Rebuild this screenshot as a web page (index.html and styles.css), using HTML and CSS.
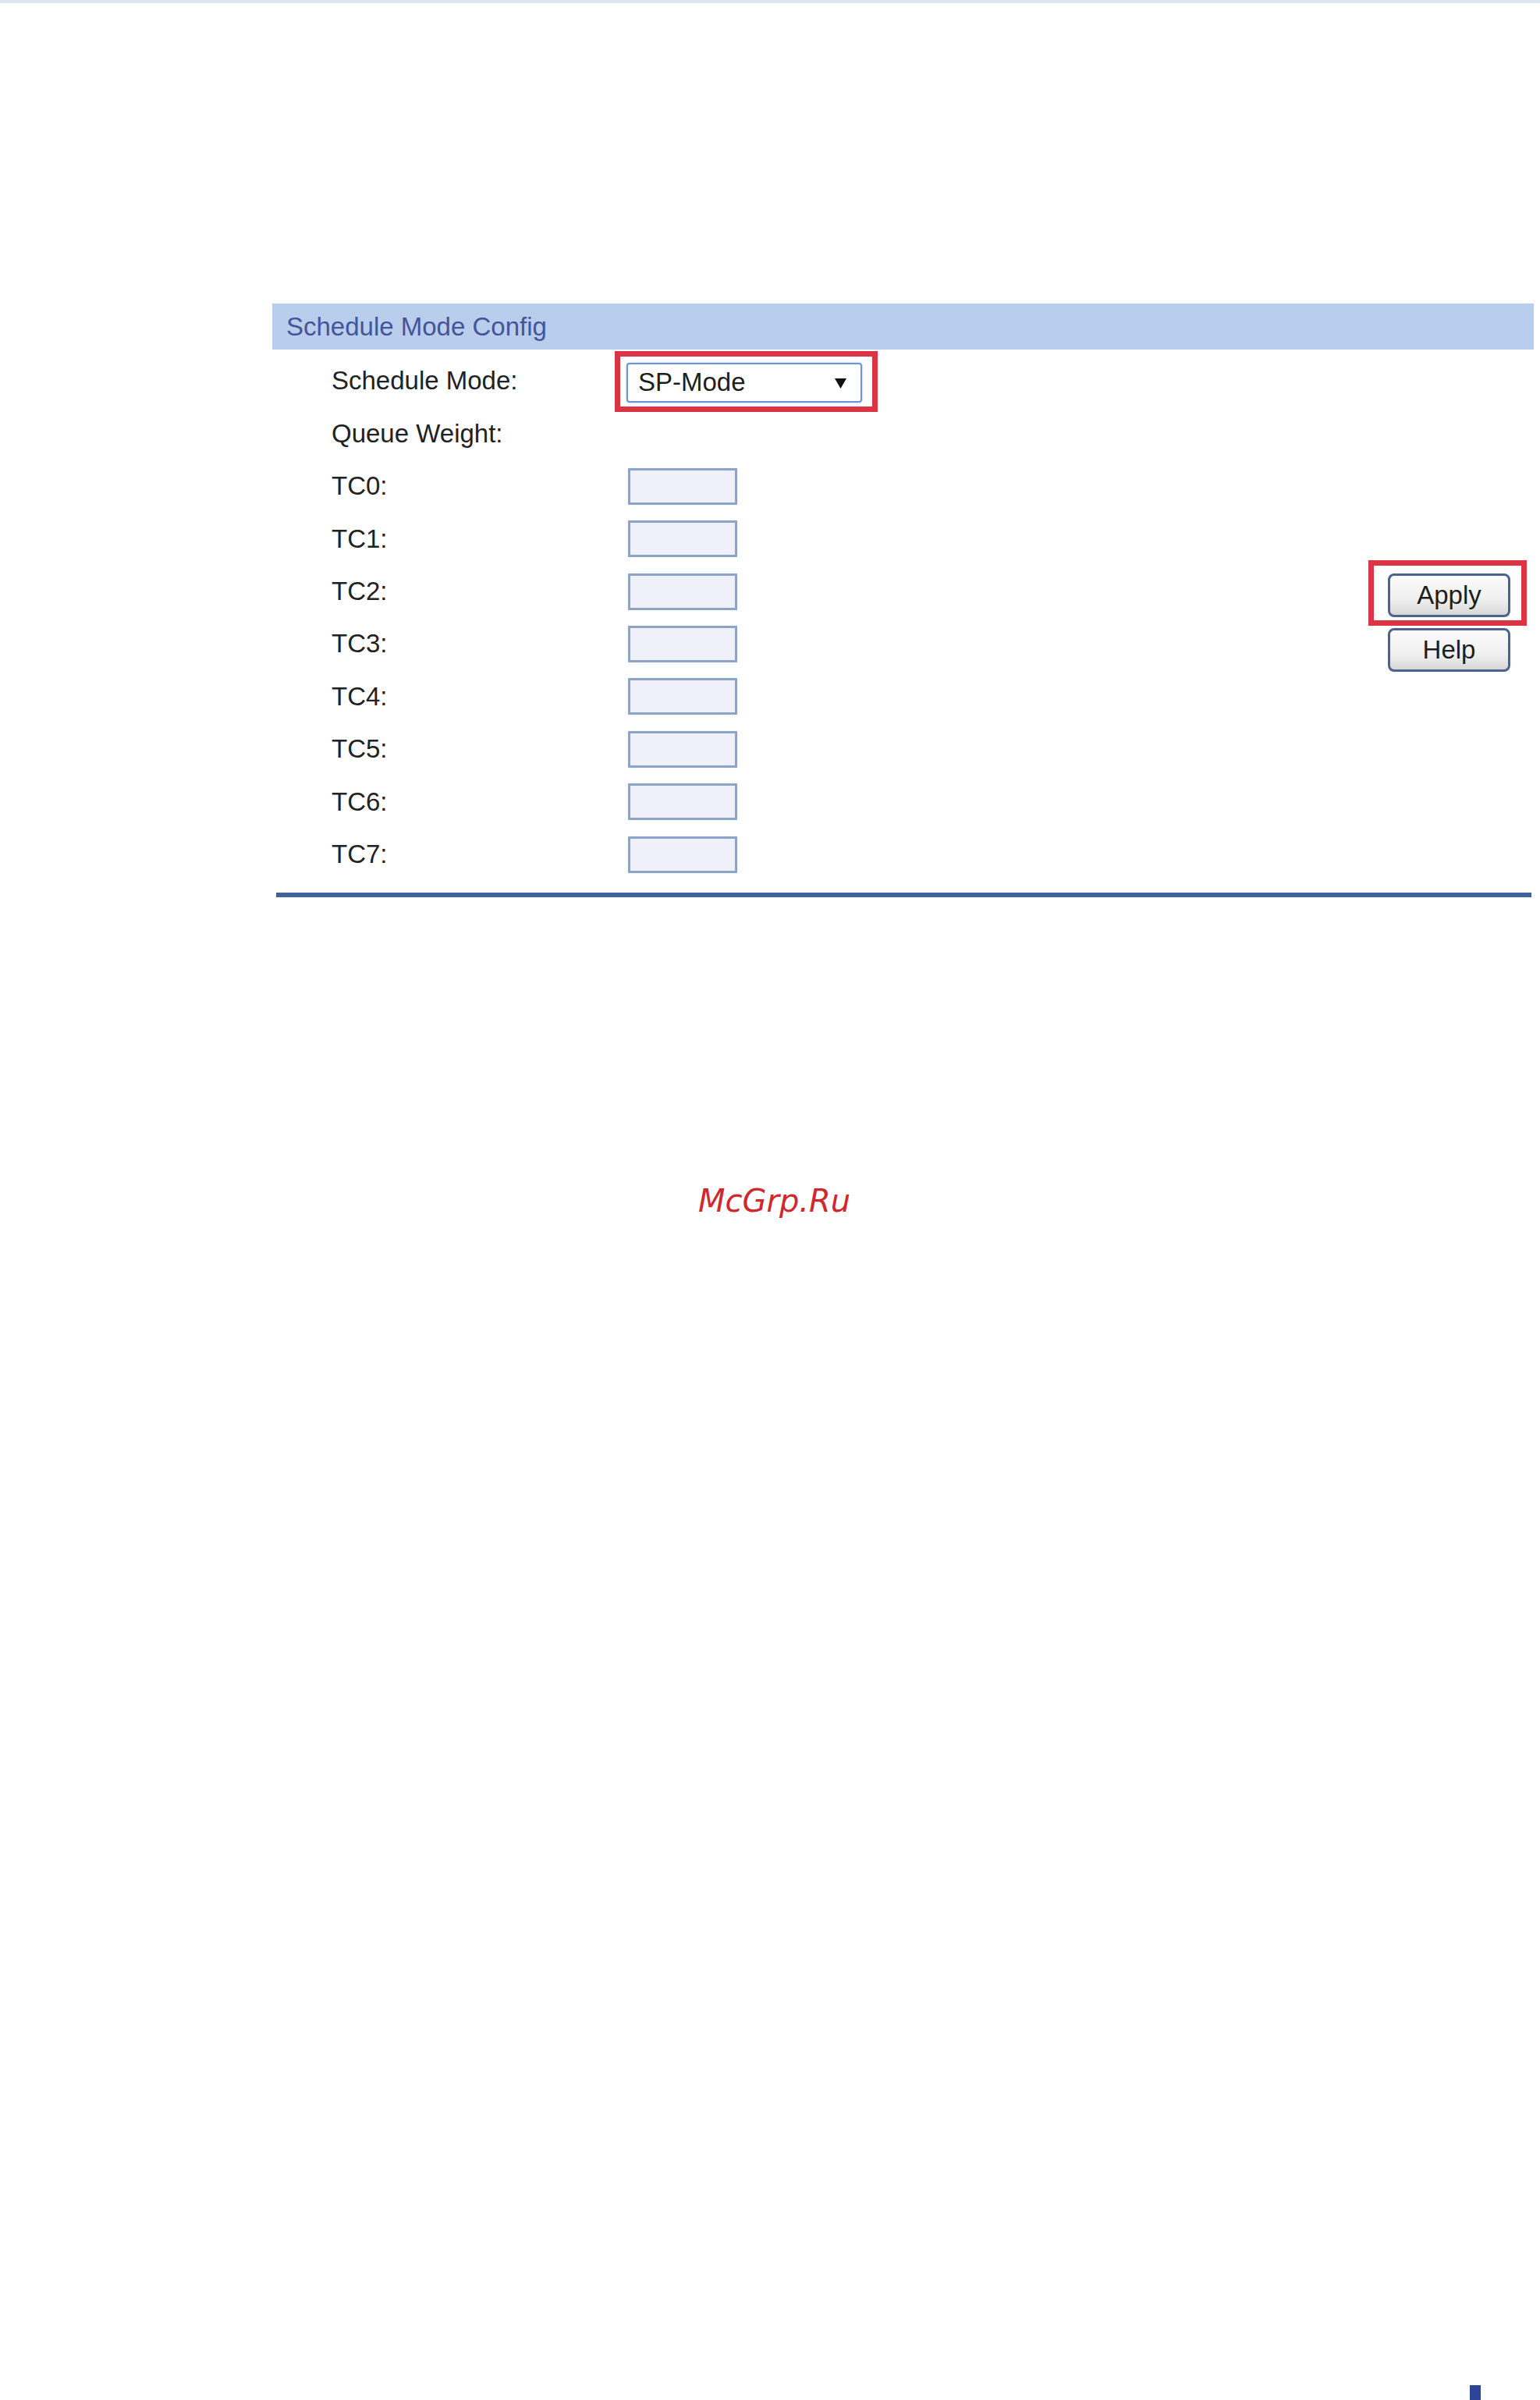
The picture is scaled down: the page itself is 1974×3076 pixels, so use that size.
FILE: index.html
```html
<!DOCTYPE html>
<html lang="en">
<head>
<meta charset="utf-8">
<title>Schedule Mode Config</title>
<link rel="stylesheet" href="styles.css">
</head>
<body>
<div class="page">
  <div class="top-strip"></div>
  <section class="panel">
    <div class="panel-title">Schedule Mode Config</div>
    <div class="panel-body">
      <div class="rows">
        <div class="row">
          <div class="label">Schedule Mode:</div>
          <div class="control">
            <div class="highlight highlight-select">
              <div class="select">
                <span class="select-text">SP-Mode</span>
                <svg class="select-arrow" width="15" height="13" viewBox="0 0 15 13"><polygon points="0,0 15,0 7.5,13" fill="#111"/></svg>
              </div>
            </div>
          </div>
        </div>
        <div class="row">
          <div class="label">Queue Weight:</div>
        </div>
        <div class="row"><div class="label">TC0:</div><div class="control"><input class="weight" type="text"></div></div>
        <div class="row"><div class="label">TC1:</div><div class="control"><input class="weight" type="text"></div></div>
        <div class="row"><div class="label">TC2:</div><div class="control"><input class="weight" type="text"></div></div>
        <div class="row"><div class="label">TC3:</div><div class="control"><input class="weight" type="text"></div></div>
        <div class="row"><div class="label">TC4:</div><div class="control"><input class="weight" type="text"></div></div>
        <div class="row"><div class="label">TC5:</div><div class="control"><input class="weight" type="text"></div></div>
        <div class="row"><div class="label">TC6:</div><div class="control"><input class="weight" type="text"></div></div>
        <div class="row"><div class="label">TC7:</div><div class="control"><input class="weight" type="text"></div></div>
      </div>
      <div class="actions">
        <div class="highlight highlight-btn">
          <button class="btn" type="button">Apply</button>
        </div>
        <button class="btn btn-help" type="button">Help</button>
      </div>
    </div>
    <div class="panel-rule"></div>
  </section>
  <div class="watermark">McGrp.Ru</div>
  <div class="corner-mark"></div>
</div>
</body>
</html>
```

FILE: styles.css
```css
html, body {
  margin: 0;
  padding: 0;
  background: #ffffff;
}

.page {
  width: 1974px;
  height: 3076px;
  display: flex;
  flex-direction: column;
  font-family: "Liberation Sans", Arial, sans-serif;
  color: #222222;
  overflow: hidden;
}

.top-strip {
  height: 4px;
  background: #dce6ec;
  flex: none;
}

.panel {
  margin-top: 385px;
  margin-left: 349px;
  width: 1617px;
  flex: none;
}

.panel-title {
  height: 59px;
  line-height: 59px;
  background: #b9cdec;
  color: #46559a;
  font-size: 33px;
  padding-left: 18px;
}

.panel-body {
  display: flex;
  justify-content: space-between;
  align-items: flex-start;
  padding-right: 9px;
}

.rows {
  padding-top: 6.8px;
  display: flex;
  flex-direction: column;
}

.row {
  height: 67.4px;
  display: flex;
  align-items: center;
}

.label {
  margin-left: 76px;
  width: 363px;
  font-size: 33px;
  line-height: 38px;
  color: #222222;
  white-space: nowrap;
}

.control {
  display: flex;
  align-items: center;
}

.highlight {
  border: 7px solid #db3444;
  background: #ffffff;
}

.highlight-select {
  padding: 8px 13px 5px 8px;
}

.select {
  box-sizing: border-box;
  width: 302px;
  height: 51px;
  border: 2px solid #6d93d6;
  border-radius: 4px;
  box-shadow: 0 0 3px #a6c2f0;
  background: #ffffff;
  display: flex;
  align-items: center;
  justify-content: space-between;
  padding: 0 18px 0 13px;
}

.select-text {
  font-size: 33px;
  line-height: 38px;
  color: #1e1e1e;
}

.select-arrow {
  display: block;
  margin-top: 2px;
}

.weight {
  box-sizing: border-box;
  margin: 0 0 0 17px;
  width: 140px;
  height: 47px;
  border: 3px solid #8ca5c7;
  border-radius: 1px;
  background: #eff0f9;
  box-shadow: 0 0 1px #b7c7dc;
  padding: 0;
  outline: none;
}

.actions {
  margin-top: 270px;
  width: 203px;
  display: flex;
  flex-direction: column;
  align-items: flex-start;
}

.highlight-btn {
  box-sizing: border-box;
  width: 203px;
  padding: 10px 14px 4px 18px;
}

.btn {
  box-sizing: border-box;
  width: 157px;
  height: 56px;
  border: 3px solid #4d6291;
  border-radius: 8px;
  background: linear-gradient(#fbfbfb 0%, #f0f0f0 60%, #e2e2e2 85%, #d6d6d6 100%);
  font-family: "Liberation Sans", Arial, sans-serif;
  font-size: 33px;
  line-height: 40px;
  color: #1e1e1e;
  padding: 0;
  margin: 0;
  display: block;
}

.btn-help {
  margin-top: 3px;
  margin-left: 25px;
}

.panel-rule {
  height: 6px;
  background: #3f6399;
  margin: 15.2px 3px 0 5px;
}

.watermark {
  flex: none;
  margin-top: 365px;
  padding-left: 895px;
  font-family: "DejaVu Sans", sans-serif;
  font-style: oblique;
  font-size: 40px;
  line-height: 48px;
  color: #d0282c;
}

.corner-mark {
  flex: none;
  margin-top: auto;
  margin-left: 1884px;
  width: 14px;
  height: 19px;
  background: #2e4597;
}
```
